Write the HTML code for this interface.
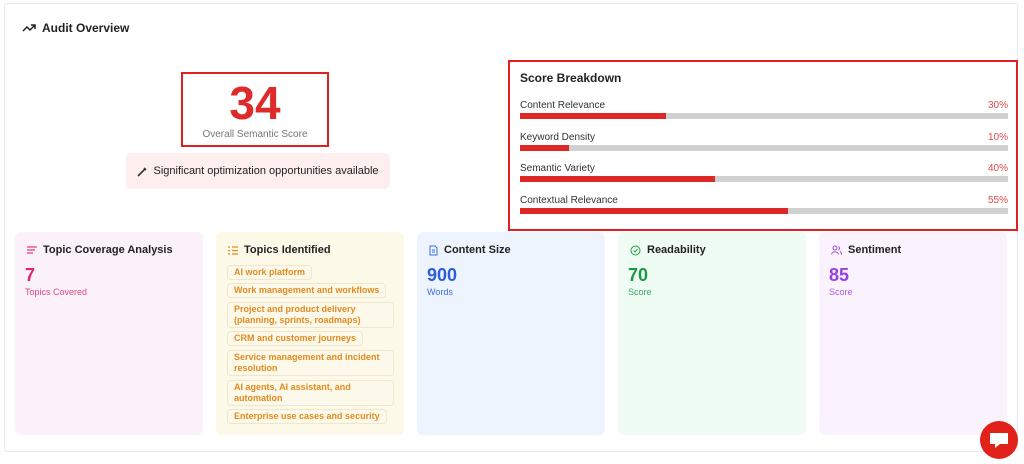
<!DOCTYPE html>
<html><head><meta charset="utf-8"><style>
*{box-sizing:border-box;margin:0;padding:0}
body{width:1024px;height:457px;background:#fff;font-family:"Liberation Sans",sans-serif;position:relative;overflow:hidden;color:#222}
.outer{position:absolute;left:4px;top:3px;width:1014px;height:449px;border:1px solid #e8e8ec;border-radius:3px}
.abs{position:absolute}
.title{left:22px;top:21px;font-size:12px;font-weight:bold;color:#222;display:flex;align-items:center;gap:6px}
.scorebox{left:181px;top:72px;width:148px;height:75px;border:2px solid #e02020}
.scorebox .n{position:absolute;left:0;right:0;top:7px;text-align:center;font-size:46px;font-weight:bold;color:#de2a2a;line-height:44px}
.scorebox .l{position:absolute;left:0;right:0;top:55px;text-align:center;font-size:10px;color:#777}
.opp{left:126px;top:153px;width:264px;height:36px;background:#fcefee;border-radius:5px;font-size:11px;color:#222;display:flex;align-items:center;justify-content:center;gap:5px}
.bd{left:508px;top:60px;width:510px;height:171px;border:2px solid #e02020}
.bd h3{position:absolute;left:10px;top:9px;font-size:12px;font-weight:bold;color:#222}
.row{position:absolute;left:10px;width:488px;font-size:10px;color:#333}
.row .p{position:absolute;right:0;top:0;color:#e04848}
.row .bar{position:absolute;left:0;top:13px;width:488px;height:6px;background:#d0d0d0}
.row .bar i{display:block;height:6px;background:#de2727}
.card{position:absolute;top:232px;width:188px;height:203px;border-radius:6px}
.card .h{position:absolute;left:12px;top:12px;font-size:11px;font-weight:bold;color:#222;display:flex;align-items:center;gap:6px}
.card .v{position:absolute;left:10px;top:33px;font-size:18px;font-weight:bold}
.card .s{position:absolute;left:10px;top:55px;font-size:9px}
.chip{position:absolute;left:11px;border:1px solid #f0e6cc;border-radius:4px;font-size:9px;font-weight:bold;color:#e38a1e;padding:1px 6px;line-height:11px;background:#fdf9ea}
</style></head><body>
<div class="outer"></div>
<div class="abs title"><svg width="14" height="10" viewBox="0 0 14 10"><path d="M1 8 L5 4 L8 7 L13 2 M9 2 H13 V6" fill="none" stroke="#222" stroke-width="1.5"/></svg>Audit Overview</div>
<div class="abs scorebox"><div class="n">34</div><div class="l">Overall Semantic Score</div></div>
<div class="abs opp"><svg width="11" height="11" viewBox="0 0 11 11"><path d="M2 9 L8 3 M7 2 L9 4 M1 10 L3 8" stroke="#333" stroke-width="1.6" fill="none"/></svg>Significant optimization opportunities available</div>
<div class="abs bd"><h3>Score Breakdown</h3>
<div class="row" style="top:38px">Content Relevance<span class="p">30%</span><div class="bar"><i style="width:30%"></i></div></div>
<div class="row" style="top:70px">Keyword Density<span class="p">10%</span><div class="bar"><i style="width:10%"></i></div></div>
<div class="row" style="top:101px">Semantic Variety<span class="p">40%</span><div class="bar"><i style="width:40%"></i></div></div>
<div class="row" style="top:133px">Contextual Relevance<span class="p">55%</span><div class="bar"><i style="width:55%"></i></div></div>
</div>
<div class="card" style="left:15px;background:#fbf1fa"><div class="h"><svg width="10" height="8"><path d="M0 1H10M0 4H8M0 7H6" stroke="#e23c7c" stroke-width="1.2"/></svg>Topic Coverage Analysis</div><div class="v" style="color:#e0246c">7</div><div class="s" style="color:#e0467f">Topics Covered</div></div>
<div class="card" style="left:216px;background:#fdf9e8"><div class="h"><svg width="10" height="9"><path d="M0 1H2M0 4.5H2M0 8H2M4 1H10M4 4.5H10M4 8H10" stroke="#e38a1e" stroke-width="1.2"/></svg>Topics Identified</div>
<div class="chip" style="top:33px">AI work platform</div>
<div class="chip" style="top:51px">Work management and workflows</div>
<div class="chip" style="top:70px;width:167px">Project and product delivery (planning, sprints, roadmaps)</div>
<div class="chip" style="top:99px">CRM and customer journeys</div>
<div class="chip" style="top:118px;width:167px">Service management and incident resolution</div>
<div class="chip" style="top:148px;width:167px">AI agents, AI assistant, and automation</div>
<div class="chip" style="top:177px">Enterprise use cases and security</div>
</div>
<div class="card" style="left:417px;background:#eef4fe"><div class="h"><svg width="9" height="11"><path d="M1 1H6L8 3V10H1Z M3 5H6M3 7H6" stroke="#3b6fe0" fill="none" stroke-width="1"/></svg>Content Size</div><div class="v" style="color:#2b5fd9">900</div><div class="s" style="color:#3b6fe0">Words</div></div>
<div class="card" style="left:618px;background:#effcf3"><div class="h"><svg width="11" height="11"><circle cx="5.5" cy="5.5" r="4.5" stroke="#21a04a" fill="none"/><path d="M3.5 5.5L5 7L7.5 4" stroke="#21a04a" fill="none"/></svg>Readability</div><div class="v" style="color:#1b9a45">70</div><div class="s" style="color:#3aa85e">Score</div></div>
<div class="card" style="left:819px;background:#faf2fc"><div class="h"><svg width="11" height="10"><circle cx="4" cy="3" r="2" stroke="#a64de0" fill="none"/><path d="M0.5 9.5C1 6 7 6 7.5 9.5M7.5 1.5A2 2 0 0 1 7.5 5M9 6.5C10 7 10.5 8 10.5 9.5" stroke="#a64de0" fill="none"/></svg>Sentiment</div><div class="v" style="color:#9b3fe0">85</div><div class="s" style="color:#a85ae6">Score</div></div>
<div class="abs" style="left:980px;top:421px;width:38px;height:38px;border-radius:50%;background:#e0221a"><svg width="38" height="38" viewBox="0 0 38 38"><path d="M10 12H28V23H20L15 27V23H10Z" fill="#fff"/></svg></div>
</body></html>
